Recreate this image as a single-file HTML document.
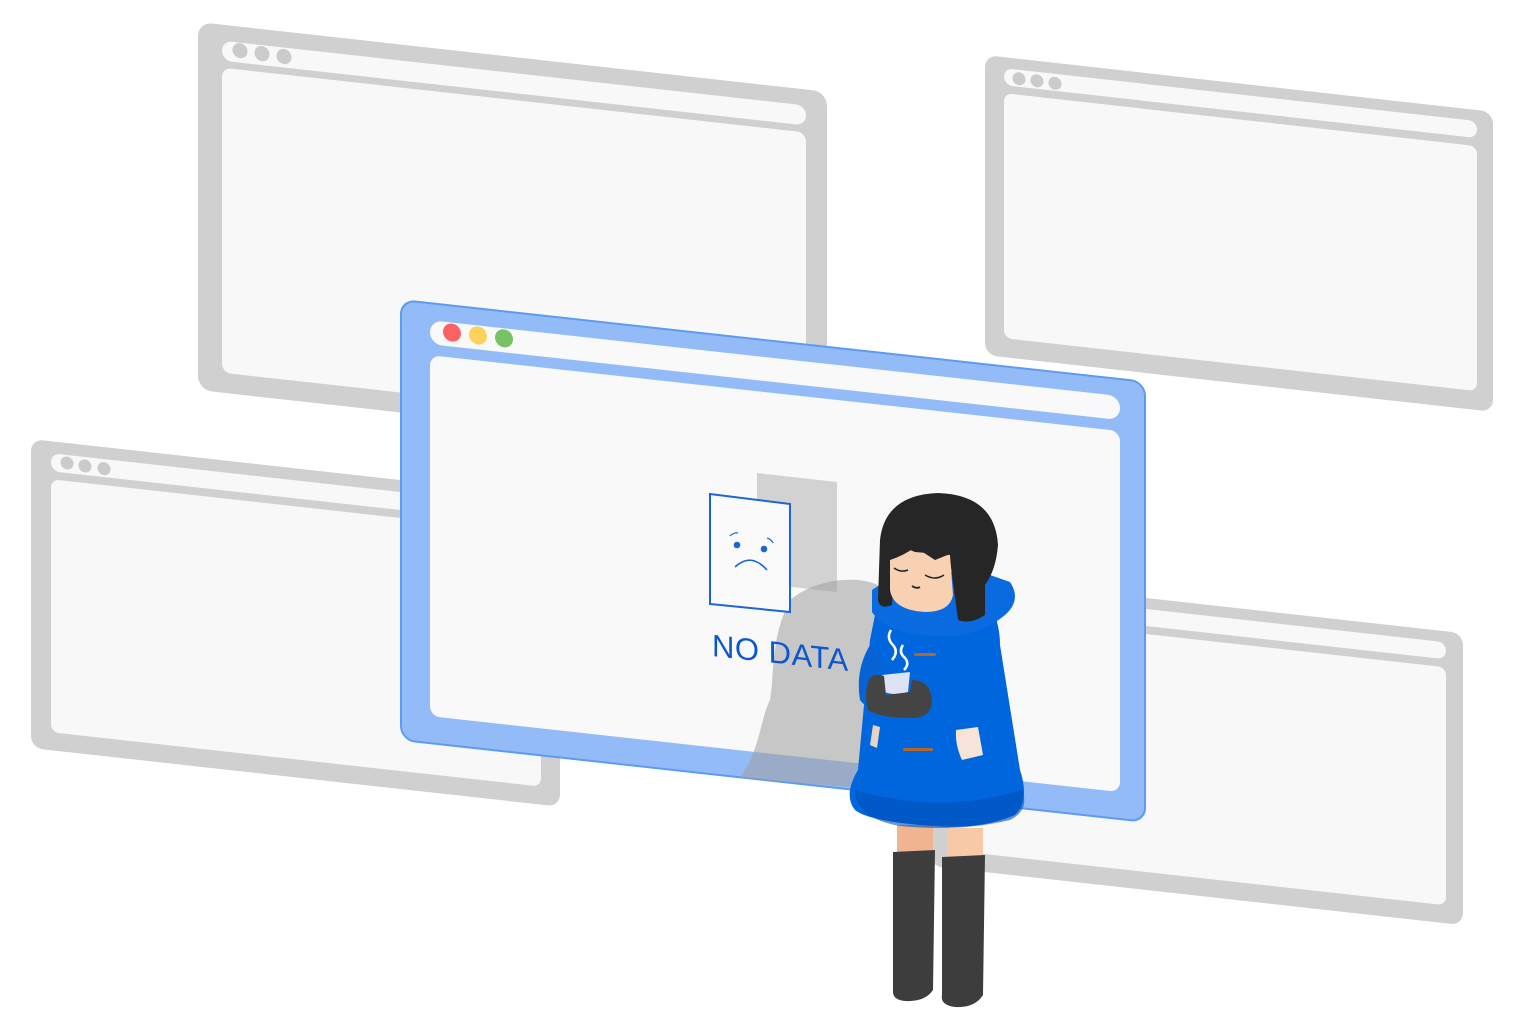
<!DOCTYPE html>
<html><head><meta charset="utf-8"><style>
html,body{margin:0;padding:0;background:#fff;}
svg{display:block;}
</style></head><body>
<svg width="1524" height="1022" viewBox="0 0 1524 1022" xmlns="http://www.w3.org/2000/svg">
<g transform="matrix(1,0.111,0,1,198,22)">
<rect x="0" y="0" width="629" height="368" rx="14" fill="#d0d0d0"/>
<rect x="24" y="16" width="584" height="20" rx="10" fill="#f8f8f8"/>
<rect x="24" y="43" width="584" height="305" rx="9" fill="#f8f8f8"/>
<circle cx="42" cy="24" r="7.5" fill="#cbcbcb"/><circle cx="64" cy="24.5" r="7.5" fill="#cbcbcb"/><circle cx="86" cy="25" r="7.5" fill="#cbcbcb"/>
</g>
<g transform="matrix(1,0.112,0,1,985,55)">
<rect x="0" y="0" width="508" height="300" rx="12" fill="#d0d0d0"/>
<rect x="19" y="11" width="473" height="17" rx="8.5" fill="#f8f8f8"/>
<rect x="19" y="36" width="473" height="245" rx="8" fill="#f8f8f8"/>
<circle cx="34" cy="20" r="6.5" fill="#cbcbcb"/><circle cx="52" cy="20" r="6.5" fill="#cbcbcb"/><circle cx="70" cy="20.5" r="6.5" fill="#cbcbcb"/>
</g>
<g transform="matrix(1,0.111,0,1,930,574)">
<rect x="0" y="0" width="533" height="292" rx="12" fill="#d0d0d0"/>
<rect x="20" y="11" width="496" height="17" rx="8.5" fill="#f8f8f8"/>
<rect x="20" y="36" width="496" height="238" rx="8" fill="#f8f8f8"/>
</g>
<g transform="matrix(1,0.111,0,1,31,439)">
<rect x="0" y="0" width="529" height="309" rx="12" fill="#d0d0d0"/>
<rect x="20" y="12" width="490" height="18" rx="9" fill="#f8f8f8"/>
<rect x="20" y="38" width="490" height="253" rx="8" fill="#f8f8f8"/>
<circle cx="36" cy="20" r="6.5" fill="#cbcbcb"/><circle cx="54" cy="21" r="6.5" fill="#cbcbcb"/><circle cx="73" cy="21.5" r="6.5" fill="#cbcbcb"/>
</g>
<g transform="matrix(1,0.110,0,1,401,300)">
<rect x="0" y="0" width="744" height="440" rx="14" fill="#93bbf8" stroke="#5d9bf0" stroke-width="2"/>
<rect x="29" y="17" width="690" height="24" rx="12" fill="#f9f9f9"/>
<rect x="29" y="52" width="690" height="361" rx="10" fill="#f9f9f9"/>
<circle cx="51" cy="27" r="9" fill="#fd6262"/><circle cx="77" cy="27" r="9" fill="#fcd25a"/><circle cx="103" cy="27" r="9" fill="#78c266"/>
</g>
<polygon points="757,473 837,482 837,592 757,583" fill="#d2d2d2"/>
<path d="M790,600 C820,575 870,575 885,590 L885,790 L740,778 C760,750 760,720 770,700 C775,670 770,640 790,600 Z" fill="#9e9e9e" opacity="0.55"/>
<polygon points="710,494 790,504 790,612 710,604" fill="#fafafa" stroke="#1a66d8" stroke-width="2"/>
<circle cx="737" cy="545" r="3.3" fill="#1a66d8"/><circle cx="764" cy="549" r="3.3" fill="#1a66d8"/>
<path d="M735,567 Q751,552 767,570" fill="none" stroke="#1a66d8" stroke-width="1.6"/>
<path d="M730,536 Q734,532 738,533" fill="none" stroke="#1a66d8" stroke-width="1.2"/>
<path d="M767,538 Q771,539 773,543" fill="none" stroke="#1a66d8" stroke-width="1.2"/>
<g transform="matrix(1,0.11,0,1,712,0)">
<text x="0" y="656" font-family="Liberation Sans, sans-serif" font-size="31" fill="#0a58cc" letter-spacing="0.5">NO DATA</text>
</g>
<rect x="897" y="825" width="36" height="40" fill="#f0b590"/>
<rect x="947" y="828" width="36" height="40" fill="#f8c9a6"/>
<path d="M893,852 L935,850 L933,990 Q925,1002 905,1001 Q892,1000 893,990 Z" fill="#3d3d3d"/>
<path d="M942,857 L985,855 L983,995 Q975,1008 955,1007 Q940,1005 942,995 Z" fill="#3d3d3d"/>
<path d="M875,615 L995,615 Q1000,630 1000,645 L1020,770 Q1030,800 1015,815 Q980,830 935,826 Q870,822 855,810 Q843,795 858,770 L870,640 Z" fill="#0066dd"/>
<path d="M855,790 Q940,815 1022,790 Q1030,810 1010,820 Q960,832 900,826 Q855,818 855,790 Z" fill="#0050b8" opacity="0.6"/>
<path d="M872,590 Q905,565 990,575 L1010,582 Q1022,600 1005,615 Q975,640 930,636 Q885,632 872,612 Z" fill="#0a6be0"/>
<path d="M870,645 Q855,670 860,700 Q870,715 910,705 L915,690 Q880,690 882,660 Z" fill="#0563d6"/>
<path d="M956,730 L978,727 L983,755 L962,760 Q955,745 956,730 Z" fill="#f6e4d8"/>
<path d="M873,725 L880,727 L877,748 L870,745 Z" fill="#e8d4c6"/>
<rect x="914" y="653" width="22" height="3" rx="1.5" fill="#b8652a"/>
<rect x="903" y="748" width="30" height="3" rx="1.5" fill="#b8652a"/>
<path d="M880,540 Q885,495 938,493 Q995,495 998,545 Q996,570 985,585 L985,615 Q970,625 958,620 L950,560 L895,560 L892,605 Q880,610 878,600 Z" fill="#262626"/>
<path d="M890,552 Q900,545 915,552 L950,555 L953,595 Q950,612 925,612 Q893,610 890,590 Z" fill="#f8d0b2"/>
<path d="M888,545 Q900,515 930,515 Q955,515 960,550 L935,560 L915,547 Q905,555 890,560 Z" fill="#262626"/>
<path d="M894,568 Q901,573 908,570 M925,575 Q935,581 944,575" fill="none" stroke="#222" stroke-width="1.5"/>
<path d="M912,586 Q917,589 920,587" fill="none" stroke="#222" stroke-width="1.8"/>
<path d="M891,630 Q886,638 893,645 Q899,652 892,660 M903,645 Q898,652 905,658 Q910,664 904,670" fill="none" stroke="#ffffff" stroke-width="2.5"/>
<path d="M882,675 L910,672 L908,692 Q895,696 884,692 Z" fill="#dde2f5"/>
<path d="M868,683 Q870,672 884,676 L886,695 L910,692 L912,680 Q930,680 932,700 Q932,718 912,718 Q880,718 868,710 Q864,696 868,683 Z" fill="#444"/>
</svg>
</body></html>
